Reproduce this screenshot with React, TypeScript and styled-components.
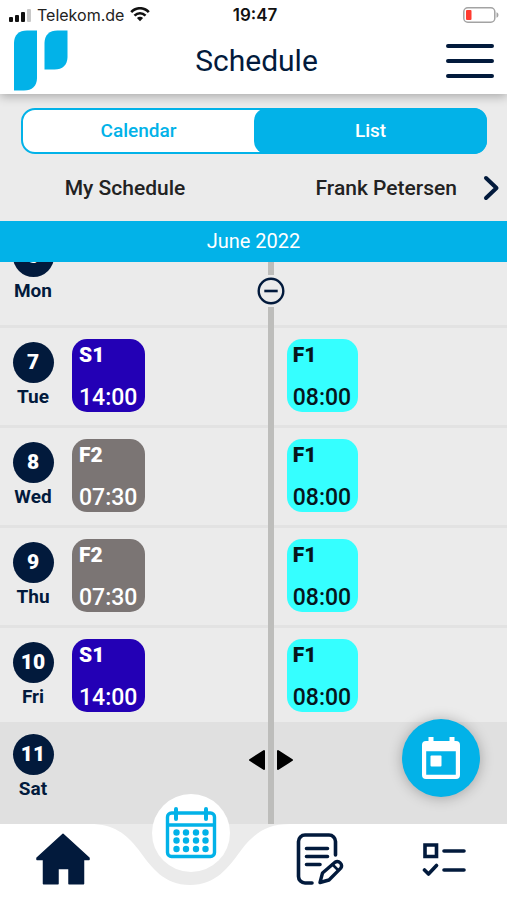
import React from "react";
import styled, { createGlobalStyle } from "styled-components";

const NAVY = "#021a3c";
const BLUE = "#02b2e8";
const GREY = "#ebebeb";

const GlobalStyle = createGlobalStyle`
  *, *::before, *::after { box-sizing: border-box; }
  body { margin: 0; font-family: Roboto, "Liberation Sans", sans-serif; color: ${NAVY}; }
  button { font: inherit; color: inherit; border: 0; padding: 0; background: none; cursor: pointer; }
  svg { display: block; }
`;

const Screen = styled.div`
  display: flex;
  flex-direction: column;
  height: 100vh;
  background: ${GREY};
  overflow: hidden;
`;

const Top = styled.header`
  position: relative;
  background: #fff;
  box-shadow: 0 2px 10px rgba(0, 0, 0, 0.3);
`;

const StatusBar = styled.div`
  display: grid;
  grid-template-columns: 1fr auto 1fr;
  align-items: center;
  height: 29px;
  padding: 0 8px;
  font-family: Inter, sans-serif;
  font-size: 16px;
  color: #222;
`;

const Carrier = styled.div`
  display: flex;
  align-items: center;
  gap: 6px;
`;

const Clock = styled.time`
  padding-left: 3px;
  font-size: 17px;
  font-weight: 600;
  color: #111;
`;

const Battery = styled.div`
  justify-self: end;
`;

const TitleBar = styled.div`
  display: grid;
  grid-template-columns: 1fr auto 1fr;
  align-items: center;
  height: 65px;
  padding: 0 13px 2px;
`;

const Title = styled.h1`
  margin: 0;
  padding-left: 6px;
  font-size: 30px;
  font-weight: 400;
`;

const MenuButton = styled.button`
  justify-self: end;
`;

const Toggle = styled.div`
  display: grid;
  grid-template-columns: 1fr 1fr;
  height: 46px;
  margin: 14px 20px 0 21px;
  border-radius: 14px;
  background: #fff;
  border: 2px solid ${BLUE};
`;

const ToggleButton = styled.button<{ $active?: boolean }>`
  margin: ${(p) => (p.$active ? "-2px -2px -2px 0" : "0")};
  padding-bottom: 1px;
  border-radius: 13px;
  font-size: 19px;
  font-weight: 500;
  color: ${(p) => (p.$active ? "#fff" : BLUE)};
  background: ${(p) => (p.$active ? BLUE : "transparent")};
`;

const People = styled.div`
  display: grid;
  grid-template-columns: 50% 1fr auto;
  align-items: center;
  height: 67px;
  padding-right: 7px;
  font-size: 21px;
  font-weight: 500;
  color: #222;
`;

const Person = styled.span<{ $end?: boolean }>`
  text-align: ${(p) => (p.$end ? "right" : "center")};
  padding-right: ${(p) => (p.$end ? "26px" : "0")};
`;

const Month = styled.h2`
  position: relative;
  z-index: 1;
  margin: 0;
  height: 41px;
  line-height: 41px;
  background: ${BLUE};
  color: #fff;
  font-size: 20px;
  font-weight: 400;
  text-align: center;
`;

const DayList = styled.ol`
  position: relative;
  flex: 1;
  min-height: 0;
  margin: 0;
  padding: 0;
  list-style: none;
  overflow: hidden;
`;

const Divider = styled.li`
  position: absolute;
  top: 0;
  bottom: 0;
  left: 53.4%;
  width: 6px;
  margin-left: -3px;
  background: #bdbdbb;
`;

const Handle = styled.button<{ $kind: "collapse" | "resize" }>`
  position: absolute;
  left: 50%;
  top: ${(p) => (p.$kind === "collapse" ? "13px" : "auto")};
  bottom: ${(p) => (p.$kind === "collapse" ? "auto" : "53px")};
  transform: translateX(-50%);
  background: ${(p) => (p.$kind === "collapse" ? GREY : "none")};
`;

type RowKind = "partial" | "normal" | "beforeWeekend" | "weekend";

const rowPadding: Record<RowKind, string> = {
  partial: "11px 0 20px",
  normal: "11px 0 13px",
  beforeWeekend: "11px 0 10px",
  weekend: "9px 0 20px",
};

const Row = styled.li<{ $kind: RowKind }>`
  display: grid;
  grid-template-columns: 66px calc(53.4% - 66px) 1fr;
  align-items: start;
  padding: ${(p) => rowPadding[p.$kind]};
  margin-top: ${(p) => (p.$kind === "partial" ? "-40px" : "0")};
  min-height: ${(p) => (p.$kind === "weekend" ? "102px" : "0")};
  background: ${(p) => (p.$kind === "weekend" ? "#e0e0e0" : GREY)};
  border-bottom: ${(p) => (p.$kind === "partial" || p.$kind === "normal" ? "3px solid #e2e2e2" : "0")};
`;

const Day = styled.div`
  display: flex;
  flex-direction: column;
  align-items: center;
  padding-top: 3px;
  font-size: 19px;
  line-height: 28px;
  font-weight: 700;
`;

const DayNumber = styled.span`
  width: 41px;
  height: 41px;
  border-radius: 50%;
  background: ${NAVY};
  color: #fff;
  font-size: 21px;
  font-weight: 900;
  line-height: 41px;
  text-align: center;
`;

const Shift = styled.button<{ $bg: string; $fg: string }>`
  display: flex;
  flex-direction: column;
  justify-content: space-between;
  align-items: flex-start;
  width: 73px;
  height: 73px;
  margin-left: 6px;
  padding: 4px 7px 1px;
  border-radius: 15px;
  background: ${(p) => p.$bg};
  color: ${(p) => p.$fg};
`;

const OtherShift = styled(Shift)`
  grid-column: 3;
  width: 71px;
  margin-left: 16px;
  padding-left: 6px;
`;

const Code = styled.span`
  font-size: 21px;
  line-height: 24px;
  font-weight: 900;
`;

const Hour = styled.span`
  font-size: 23px;
  line-height: 26px;
  font-weight: 500;
`;

const TodayButton = styled.button`
  position: absolute;
  right: 27px;
  bottom: 27px;
  display: grid;
  place-items: center;
  width: 78px;
  height: 78px;
  border-radius: 50%;
  background: ${BLUE};
  color: #fff;
  box-shadow: 0 1px 14px rgba(0, 0, 0, 0.28);
`;

const Nav = styled.nav`
  position: relative;
  display: grid;
  grid-template-columns: repeat(4, 1fr);
  height: 76px;
  background: #fff;
`;

const NavButton = styled.button`
  display: flex;
  justify-content: center;
  align-items: center;
  padding-bottom: 7px;
`;

const NavCenter = styled.div`
  position: relative;
`;

const Notch = styled.svg`
  position: absolute;
  top: 0;
  left: 50%;
  margin-left: -100px;
`;

const ScheduleButton = styled.button`
  position: absolute;
  top: -30px;
  left: 50%;
  display: grid;
  place-items: center;
  width: 78px;
  height: 78px;
  margin-left: -38px;
  border-radius: 50%;
  background: #fff;
  color: ${BLUE};
`;

const BRIGHT = { bg: "#35ffff", fg: "#06161c" };
const VIOLET = { bg: "#2300b5", fg: "#fff" };
const STONE = { bg: "#7b7574", fg: "#fff" };

interface ShiftData {
  code: string;
  hour: string;
  tone: { bg: string; fg: string };
}
interface DayData {
  date: number;
  name: string;
  kind: RowKind;
  mine?: ShiftData;
  other?: ShiftData;
}

const late: ShiftData = { code: "S1", hour: "14:00", tone: VIOLET };
const early: ShiftData = { code: "F2", hour: "07:30", tone: STONE };
const frank: ShiftData = { code: "F1", hour: "08:00", tone: BRIGHT };

const days: DayData[] = [
  { date: 6, name: "Mon", kind: "partial" },
  { date: 7, name: "Tue", kind: "normal", mine: late, other: frank },
  { date: 8, name: "Wed", kind: "normal", mine: early, other: frank },
  { date: 9, name: "Thu", kind: "normal", mine: early, other: frank },
  { date: 10, name: "Fri", kind: "beforeWeekend", mine: late, other: frank },
  { date: 11, name: "Sat", kind: "weekend" },
];

const SignalIcon = () => (
  <svg width="23" height="14" viewBox="0 0 23 14" fill="#111" aria-hidden="true">
    <rect x="1" y="9" width="4" height="5" rx="1" />
    <rect x="7" y="7" width="4" height="7" rx="1" />
    <rect x="13" y="4" width="4" height="10" rx="1" />
    <rect x="19" y="1" width="4" height="13" rx="1" fill="#c8c8c8" />
  </svg>
);

const WifiIcon = () => (
  <svg width="20" height="15" viewBox="0 0 20 15" fill="none" stroke="#111" strokeWidth="2.6" aria-hidden="true">
    <path d="M1.2 5.2C6-.1 14-.1 18.8 5.2" />
    <path d="M4.5 8.6c3.2-3.2 7.8-3.2 11 0" />
    <path d="M10 14.3 6.9 11.1c1.8-1.7 4.4-1.7 6.2 0z" fill="#111" stroke="none" />
  </svg>
);

const BatteryIcon = () => (
  <svg width="36" height="16" viewBox="0 0 36 16" aria-hidden="true">
    <rect x="0.8" y="0.8" width="31" height="14.4" rx="4" fill="#fff" stroke="#a3a3a3" strokeWidth="1.5" />
    <rect x="3" y="3" width="5.5" height="10" rx="1" fill="#ff3b30" />
    <path d="M33.5 5.3c2.6.8 2.6 4.6 0 5.4z" fill="#a3a3a3" />
  </svg>
);

const Logo = () => (
  <svg width="55" height="61" viewBox="0 0 55 61" fill={BLUE} role="img" aria-label="Logo">
    <path d="M1 13C1 5 6 .5 14 .5h10V48c0 8-5 12.500-13 12.500H1z" />
    <path d="M31.500 13c0-8 5-12.500 13-12.500H54.500V27c0 8-5 12.500-13 12.500h-10z" />
  </svg>
);

const MenuIcon = () => (
  <svg width="48" height="36" viewBox="0 0 48 36" stroke={NAVY} strokeWidth="4" strokeLinecap="round" aria-hidden="true">
    <path d="M2 3h44M2 18h44M2 33h44" />
  </svg>
);

const ChevronIcon = () => (
  <svg width="17" height="26" viewBox="0 0 17 26" fill="none" stroke={NAVY} strokeWidth="4" strokeLinecap="round" strokeLinejoin="round" aria-hidden="true">
    <path d="M3 3l10.500 10L3 23" />
  </svg>
);

const MinusIcon = () => (
  <svg width="28" height="32" viewBox="0 0 28 32" fill="none" stroke={NAVY} aria-hidden="true">
    <circle cx="14" cy="16" r="12.300" strokeWidth="2.400" />
    <path d="M7.300 16h13.400" strokeWidth="2.600" />
  </svg>
);

const ResizeIcon = () => (
  <svg width="46" height="22" viewBox="0 0 46 22" fill="#000" stroke="#000" strokeWidth="2" strokeLinejoin="round" aria-hidden="true">
    <path d="M16 2v18L2 11zM30 2v18l14-9z" />
  </svg>
);

const TodayIcon = () => (
  <svg width="40" height="44" viewBox="0 0 40 44" aria-hidden="true">
    <path fill="currentColor" fillRule="evenodd" d="M7.500 1h5v4h16V1h5v4H35a4 4 0 0 1 4 4v30a4 4 0 0 1-4 4H5a4 4 0 0 1-4-4V9a4 4 0 0 1 4-4h2.500zM5.200 15.200v23.600h29.600V15.200z" />
    <rect x="9.500" y="19.500" width="11" height="11" rx="1" fill="currentColor" />
  </svg>
);

const HomeIcon = () => (
  <svg width="54" height="52" viewBox="0 0 54 52" fill={NAVY} stroke={NAVY} strokeWidth="1.500" strokeLinejoin="round" aria-hidden="true">
    <path d="M27 1.200 53 25v1.500h-5.500v24.300H33V35.500H22v15.300H7.500V26.500H1V25z" />
  </svg>
);

const GridCalendarIcon = () => (
  <svg width="52" height="52" viewBox="0 0 52 52" fill="none" stroke="currentColor" strokeWidth="3.400" strokeLinecap="round" aria-hidden="true">
    <rect x="2.500" y="6" width="47" height="43.500" rx="4" />
    <path d="M3 18h46" />
    <path d="M11 2v10M41 2v10" strokeWidth="4" />
    <g fill="currentColor" stroke="none">
      {[25.5, 33.5, 42].map((y) => [11.5, 21, 31, 40.5].map((x) => <circle key={`${x}-${y}`} cx={x} cy={y} r="3.200" />))}
    </g>
  </svg>
);

const NoteIcon = () => (
  <svg width="54" height="52" viewBox="-6 0 54 52" fill="none" stroke={NAVY} strokeWidth="3.600" strokeLinecap="round" strokeLinejoin="round" aria-hidden="true">
    <path d="M16 50H9a6.500 6.500 0 0 1-6.500-6.500V8.500A6.500 6.500 0 0 1 9 2h24a6.500 6.500 0 0 1 6.500 6.500V22" />
    <path d="M10.500 15.500h21M10.500 23.500h21M10.500 31.500h13.500" />
    <path d="M24 49.500l2.500-9.500L39 29.300a4.200 4.200 0 0 1 5.800 5.800L33 47z" strokeWidth="3.400" />
    <path d="M36.500 31.500l5 5" strokeWidth="2.600" />
  </svg>
);

const TasksIcon = () => (
  <svg width="44" height="34" viewBox="0 0 44 34" fill="none" stroke={NAVY} strokeWidth="3.600" strokeLinecap="round" strokeLinejoin="round" aria-hidden="true">
    <path d="M3 3h11.500v11.500H3z" strokeLinejoin="miter" />
    <path d="M22 9h20M22 28h20M2.500 28l4 4 8-8.500" />
  </svg>
);

const ShiftContent = ({ shift }: { shift: ShiftData }) => (
  <>
    <Code>{shift.code}</Code>
    <Hour>{shift.hour}</Hour>
  </>
);

export default function App() {
  return (
    <Screen>
      <GlobalStyle />
      <Top>
        <StatusBar>
          <Carrier>
            <SignalIcon />
            <span>Telekom.de</span>
            <WifiIcon />
          </Carrier>
          <Clock>19:47</Clock>
          <Battery>
            <BatteryIcon />
          </Battery>
        </StatusBar>
        <TitleBar>
          <Logo />
          <Title>Schedule</Title>
          <MenuButton aria-label="Menu">
            <MenuIcon />
          </MenuButton>
        </TitleBar>
      </Top>
      <Toggle>
        <ToggleButton aria-pressed={false}>Calendar</ToggleButton>
        <ToggleButton aria-pressed $active>
          List
        </ToggleButton>
      </Toggle>
      <People>
        <Person>My Schedule</Person>
        <Person $end>Frank Petersen</Person>
        <button aria-label="Next person">
          <ChevronIcon />
        </button>
      </People>
      <Month>June 2022</Month>
      <DayList>
        {days.map((day) => (
          <Row key={day.date} $kind={day.kind}>
            <Day>
              <DayNumber>{day.date}</DayNumber>
              {day.name}
            </Day>
            {day.mine && (
              <Shift $bg={day.mine.tone.bg} $fg={day.mine.tone.fg}>
                <ShiftContent shift={day.mine} />
              </Shift>
            )}
            {day.other && (
              <OtherShift $bg={day.other.tone.bg} $fg={day.other.tone.fg}>
                <ShiftContent shift={day.other} />
              </OtherShift>
            )}
          </Row>
        ))}
        <Divider>
          <Handle $kind="collapse" aria-label="Collapse">
            <MinusIcon />
          </Handle>
          <Handle $kind="resize" aria-label="Resize columns">
            <ResizeIcon />
          </Handle>
        </Divider>
        <li>
          <TodayButton aria-label="Go to today">
            <TodayIcon />
          </TodayButton>
        </li>
      </DayList>
      <Nav>
        <NavButton aria-label="Home">
          <HomeIcon />
        </NavButton>
        <NavCenter>
          <Notch width="200" height="62" viewBox="0 0 200 62" fill={GREY} aria-hidden="true">
            <path d="M0 0C24 0 36 10 48 25C62 44 74 61 100 61S138 44 152 25C164 10 176 0 200 0z" />
          </Notch>
          <ScheduleButton aria-label="Schedule">
            <GridCalendarIcon />
          </ScheduleButton>
        </NavCenter>
        <NavButton aria-label="Notes">
          <NoteIcon />
        </NavButton>
        <NavButton aria-label="Tasks">
          <TasksIcon />
        </NavButton>
      </Nav>
    </Screen>
  );
}
